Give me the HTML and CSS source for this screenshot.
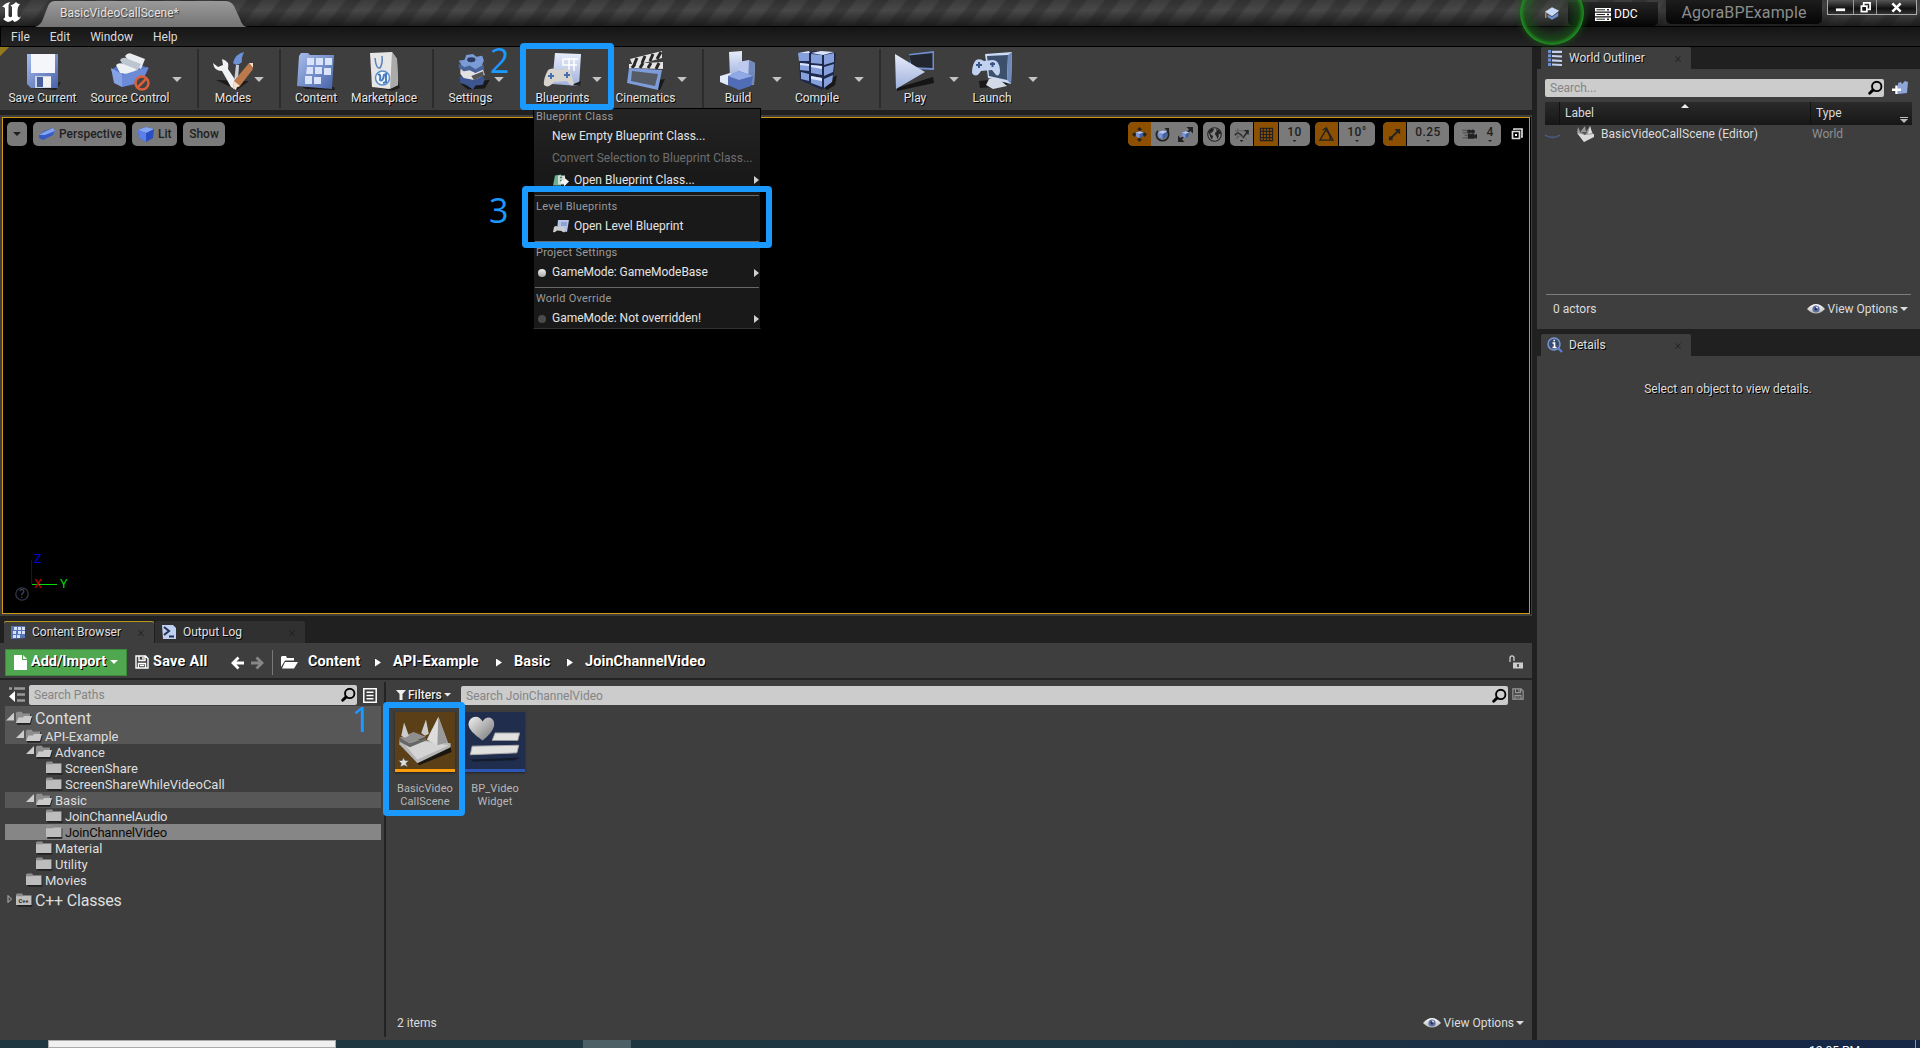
FILE: index.html
```html
<!DOCTYPE html>
<html lang="en">
<head>
<meta charset="utf-8">
<title>AgoraBPExample</title>
<link rel="stylesheet" href="styles.css">
</head>
<body>
<svg class="defs" width="0" height="0">
  <defs>
    <linearGradient id="blue" x1="0" y1="0" x2="1" y2="1"><stop offset="0" stop-color="#a9bdec"/><stop offset="1" stop-color="#4763a8"/></linearGradient>
    <linearGradient id="pale" x1="0" y1="0" x2="0" y2="1"><stop offset="0" stop-color="#e6ecfa"/><stop offset="1" stop-color="#9fb0dc"/></linearGradient>
    <linearGradient id="white" x1="0" y1="0" x2="0" y2="1"><stop offset="0" stop-color="#ffffff"/><stop offset="1" stop-color="#b4b4b4"/></linearGradient>
    <linearGradient id="gray" x1="0" y1="0" x2="1" y2="1"><stop offset="0" stop-color="#f0f0f0"/><stop offset="1" stop-color="#757575"/></linearGradient>
    <symbol id="search" viewBox="0 0 16 16"><circle cx="9.3" cy="6.3" r="5" fill="none" stroke="#000" stroke-width="2"/><path d="M5.5 10 1.8 13.6" stroke="#000" stroke-width="3" stroke-linecap="round"/></symbol>
    <symbol id="folder" viewBox="0 0 18 14"><path d="M1.5 13V2.5L2.5 1H7L8 2.5H16.5V13Z" fill="#222" transform="translate(.8 .8)"/><path d="M1 12V2L2 .8H7L8 2.6H16.5V12Z" fill="#bdbdbd"/><path d="M1 2 2 .8H7L8 2.6V3.2H1Z" fill="#8b8b8b"/></symbol>
    <symbol id="folder-open" viewBox="0 0 18 14"><path d="M1 12V2L2 .8H7L8 2.6H15V6L17 5.5 14.8 13H2Z" fill="#222" transform="translate(.7 .7)"/><path d="M1 12V2L2 .8H7L8 2.6H15V12Z" fill="#8e8e8e"/><path d="M1 12 3.5 6.5H8L9 5H17L15 12Z" fill="#cacaca"/></symbol>
    <symbol id="eye" viewBox="0 0 18 12"><path d="M0 6Q9-4 18 6 9 15 0 6Z" fill="url(#white)"/><circle cx="9" cy="6" r="3.6" fill="#5b6fa3"/><circle cx="9" cy="6" r="1.4" fill="#26304e"/><circle cx="10" cy="4.5" r="1" fill="#dce4ff"/></symbol>
    <symbol id="floppy" viewBox="0 0 14 14"><path d="M1 1H10.5L13 3.5V13H1ZM4 1V5.5H10V1M3.5 13V8.5H10.5V13M8 2V4.5M5 10.5H9" fill="none" stroke="currentColor" stroke-width="1.4"/></symbol>
    <symbol id="cube" viewBox="0 0 16 16"><path d="M0 4 8 1 16 3 15 12 8 16 1 12Z" fill="#294fc0"/><path d="M0 4 8 1 16 3 8 7Z" fill="#86a6ef"/><path d="M0 4 8 7V16L1 12Z" fill="#5b80e8"/></symbol>
    <symbol id="cube-soft" viewBox="0 0 16 16"><path d="M0 4 8 1 16 3 15 12 8 16 1 12Z" fill="#46619f"/><path d="M0 4 8 1 16 3 8 7Z" fill="#bccaf0"/><path d="M0 4 8 7V16L1 12Z" fill="#7c95d2"/></symbol>
    <symbol id="world" viewBox="0 0 18 16"><path d="M0 6 1 1 4 7V5L8 0 9 6 13 0 15 6 17 9 7 16Z" fill="#999"/><path d="M0 7 8 9 17 8V11L7 16Z" fill="#dadada"/><path d="M13 0 15 7 11 8Z" fill="#e0e0e0"/><path d="M4 6 8 9 10 6Z" fill="#555"/></symbol>
  </defs>
</svg>

<div class="app">
  <header class="titlebar">
    <svg class="logo" viewBox="0 0 20 20"><path d="M0 5Q3 1 8 0 6 3 6.500 5V14Q7.500 16 10 14.500V5L8.500 3.500Q12 2.500 14 0 16 2.500 18 2 15.500 5 15.500 8V14L17 15.500Q18 15.500 19 14 18 18 12.500 20L10.500 18Q9 19.500 6 20 3 19 1 17L3 15.500V6.500Q2 4 0 5Z" fill="#fff"/></svg>
    <div class="doc-tab">
      <svg class="doc-shape" viewBox="0 0 212 26" preserveAspectRatio="none"><defs><linearGradient id="tabfill" x1="0" y1="0" x2="0" y2="1"><stop offset="0" stop-color="#9a9a9a"/><stop offset="1" stop-color="#747474"/></linearGradient></defs><path d="M0 26Q6 24 8 18L13 5Q15 0 20 0H190Q196 0 199 5L205 18Q207 25 212 26Z" fill="url(#tabfill)"/></svg>
      <span>BasicVideoCallScene*</span>
    </div>
    <div class="title-right">
      <div class="tutorial"><svg viewBox="0 0 18 16"><path d="M1 6 9 1 17 5 9 11Z" fill="#c9daf8"/><path d="M4 9 9 12 16 7V11L9 15 4 12Z" fill="#6f90cc"/><path d="M2 7V13" stroke="#d89a61" stroke-width="1.300"/></svg></div>
      <div class="ddc"><svg viewBox="0 0 16 13"><path d="M0 0H16V3.500H0ZM0 4.700H16V8.200H0ZM0 9.400H16V13H0Z" fill="#fff"/><path d="M1.500 1.800H10M1.500 6.500H10M1.500 11.200H10" stroke="#222"/><path d="M12 1.800H14M12 6.500H14M12 11.200H14" stroke="#222" stroke-width="1.500"/></svg><span>DDC</span></div>
      <div class="project">AgoraBPExample</div>
      <div class="winbtns">
        <div class="wb"><svg viewBox="0 0 12 12"><path d="M1 7H11V10H1Z" fill="#fff"/></svg></div>
        <div class="wb"><svg viewBox="0 0 12 12"><path d="M4 4V1H11V8H8.500M1.500 4.500H7.500V10.500H1.500Z" fill="none" stroke="#fff" stroke-width="1.900"/></svg></div>
        <div class="wb wide"><svg viewBox="0 0 12 12"><path d="M1.500 1.500 10.500 10.500M10.500 1.500 1.500 10.500" stroke="#fff" stroke-width="2.800"/></svg></div>
      </div>
    </div>
  </header>
  <nav class="menubar"><span>File</span><span>Edit</span><span>Window</span><span>Help</span></nav>

  <main class="main">
    <section class="left">
      <div class="toolbar">
        <div class="tool save"><svg viewBox="0 0 40 40"><path d="M8 37 38 31 33 39Z" fill="#1d1d1d"/><path d="M4 3H35V37H8L4 33Z" fill="url(#blue)"/><path d="M8 3H32V22H8Z" fill="#f4f6fa"/><path d="M12 25H28V37H12Z" fill="#ccd4ea"/><path d="M14 26H20V36H14Z" fill="#48609c"/><path d="M20 26H28V36H20Z" fill="#f1f1f1"/></svg><b>Save Current</b></div>
        <div class="tool source"><svg viewBox="0 0 40 40"><path d="M1 19 16 9 39 17 31 32 12 36Z" fill="#5674c3"/><path d="M15 5Q18 1 22 3L35 8 31 18 20 12Z" fill="#e9ecf0"/><path d="M10 9Q13 5 18 8L31 13 27 21 15 17Z" fill="#bcc5d0"/><path d="M6 14Q9 11 13 13L26 18 23 24 10 22Z" fill="#edf1f3"/><path d="M1 17 12 23 12 36 4 32Z" fill="#86a2e4"/><path d="M12 24 38 16 33 30 12 36Z" fill="#6c8bd6"/><circle cx="32" cy="32" r="6.500" fill="#444" stroke="#d9603a" stroke-width="2.500"/><path d="M27.500 36.500 36.500 27.500" stroke="#d9603a" stroke-width="2.500"/></svg><b>Source Control</b></div><i class="drop"></i>
        <i class="sep"></i>
        <div class="tool modes"><svg viewBox="0 0 40 40"><path d="M3 29 36 30 24 39Z" fill="#1b1b1b"/><path d="M0 12Q1 20 9 20L18 36 23 39 25 33 15 18Q17 10 9 8L10 14 5 16Z" fill="#f1f2f4"/><path d="M23 14 26 14 25 29 21 31Z" fill="#c8ccd8"/><path d="M20 12Q22 3 31 1 28 8 29 11 24 16 20 12Z" fill="#6c91d6"/><path d="M36 12 40 18 27 35 20 38 21 30Z" fill="#bd784b"/><path d="M36 12 40 17 40 12Z" fill="#f5ddbd"/><path d="M21 30 27 35 20 38Z" fill="#f3e2c9"/></svg><b>Modes</b></div><i class="drop"></i>
        <i class="sep"></i>
        <div class="tool content"><svg viewBox="0 0 40 40"><path d="M6 36H38L39 39 10 38Z" fill="#1c1c1c"/><path d="M3 5 5 2H12L14 4H38L36 38 1 35Z" fill="url(#blue)"/><path d="M11 7H18V14H11ZM20 7H27V14H20ZM29 7H36V14H29ZM11 16H17V23H10ZM19 16H26V23H19ZM28 17H35V24H28ZM9 25H16V33H9ZM18 26H25V33H18Z" fill="#d9e3fa"/></svg><b>Content</b></div>
        <div class="tool market"><svg viewBox="0 0 40 40"><path d="M9 36 34 30 36 37 28 40Z" fill="#222"/><path d="M6 2 28 1 33 8 34 34 25 38 8 36Z" fill="#e6e6e6"/><path d="M28 1 33 8 34 34 26 38Z" fill="#aaa"/><path d="M11 7Q12 18 16 17 19 12 18 5" fill="none" stroke="#5c83bf" stroke-width="1.500"/><circle cx="18.500" cy="27" r="7" fill="#f3f6fb" stroke="#5c8dcc" stroke-width="1.500"/><path d="M14 24Q17 22 16 29 19 31 20 24L22 23V31L19 32" fill="none" stroke="#477ebd" stroke-width="2"/></svg><b>Marketplace</b></div>
        <i class="sep"></i>
        <div class="tool settings"><svg viewBox="0 0 40 40"><g transform="translate(3.500 1) scale(.84 .96)"><path d="M7 33 42 29 36 38 16 39Z" fill="#191919"/><path d="M6 26 15 22 31 23 36 28 34 34 25 35 22 39 15 35 7 32Z" fill="#3d568f"/><path d="M7 18 18 14 34 18 36 24 29 27 22 29 11 27 7 23Z" fill="#e2e2e2"/><path d="M20 25 34 20 35 25 23 29Z" fill="#555"/><path d="M5 9 12 8 14 3 22 2 26 5 33 4 35 9 33 13 35 18 29 19 25 22 18 18 11 20 5 16 8 13Z" fill="#7b9bd6"/><path d="M5 12 12 16 18 14 25 18 35 13V18L25 22 18 19 11 20 5 16Z" fill="#486298"/><ellipse cx="20" cy="8" rx="5" ry="2.600" fill="#2b3a5f"/></g></svg><b>Settings</b></div><i class="drop"></i>
        <div class="tool blueprints"><svg viewBox="0 0 40 40"><path d="M12 2 38 3 36 35 9 33Z" fill="url(#pale)"/><path d="M20 8H35M19 14H34M26 7V20M31 7V20M20 8V13" stroke="#fff" stroke-width="1.500"/><path d="M28 34 38 30 37 35Z" fill="#222"/><path d="M5 19Q9 16 14 19L22 18Q27 17 28 23L31 33Q29 37 24 30L11 31Q5 38 1 34 0 28 5 19Z" fill="#d7d3ce"/><path d="M5 25H11M8 22V28M21 24H27M24 21V27" stroke="#496eaf" stroke-width="2"/></svg><b>Blueprints</b></div><i class="drop"></i>
        <div class="tool cinematics"><svg viewBox="0 0 40 40"><path d="M10 33 39 28 34 39Z" fill="#191919"/><path d="M4 8 36 0V7L7 15ZM3 13 37 11V18L3 17Z" fill="#e4e4e4"/><path d="M11 7 8 14M19 5 16 12M27 3 24 10M35 1 31 8M9 13 6 17M17 12 14 17M25 12 22 17M33 12 30 18" stroke="#272727" stroke-width="3"/><path d="M3 17 36 19 32 39 1 32Z" fill="#7e9cda"/><path d="M6 20 32 23 29 35 5 30Z" fill="#555c66"/></svg><b>Cinematics</b></div><i class="drop"></i>
        <i class="sep"></i>
        <div class="tool build"><svg viewBox="0 0 40 40"><path d="M11 1 24 0V22L12 27Z" fill="url(#pale)"/><path d="M20 11 31 9 37 12 36 34 23 31Z" fill="#bdcaef"/><path d="M31 9 37 12 36 34 30 32Z" fill="#7288bd"/><path d="M2 25 12 22 20 27 19 35 9 34 2 31Z" fill="#e3eafa"/><path d="M10 25 21 20 35 25 33 35 21 39 10 34Z" fill="#516db7"/><path d="M10 25 21 20 35 25 21 29Z" fill="#90a9e5"/></svg><b>Build</b></div><i class="drop"></i>
        <div class="tool compile"><svg viewBox="0 0 40 40"><path d="M25 35 40 24 38 34 30 39Z" fill="#181818"/><path d="M2 1 21 0 39 2 38 13 36 29 25 39 3 29Z" fill="#1e2849"/><path d="M1 2 12 2V10L2 10ZM14 3 25 4V13L14 12ZM27 4 37 2V11L27 14ZM3 12 12 13V20L3 19ZM14 14 25 15V24L14 22ZM27 16 37 13 36 21 27 25ZM4 21 12 23V30L4 28ZM14 25 25 27V36L14 32ZM27 28 36 24 35 31 27 37Z" fill="#86a0dd"/><path d="M1 2 12 0 13 2ZM14 2 24 0 37 1 26 4ZM3 12 12 13V15L3 14ZM14 14 25 15V18L14 16ZM14 25 25 27V30L14 28Z" fill="#dae5ff"/></svg><b>Compile</b></div><i class="drop"></i>
        <i class="sep"></i>
        <div class="tool play"><svg viewBox="0 0 40 40"><path d="M2 37 38 26 39 32 2 40Z" fill="#151515"/><path d="M14 3 39 0V19L16 18Z" fill="#6f8fce"/><path d="M14 4.500 37.500 2V17L17 16Z" fill="#22262e"/><path d="M0 3 30 21 1 38Z" fill="url(#pale)"/></svg><b>Play</b></div><i class="drop"></i>
        <div class="tool launch"><svg viewBox="0 0 40 40"><path d="M7 30 38 27 34 35 8 37Z" fill="#191919"/><path d="M13 3 40 1 39 33 16 27Z" fill="#cddcf5"/><path d="M15 5 36 4 35 29 17 25Z" fill="#3c506d"/><path d="M36 4 40 1 39 33 35 29Z" fill="#6f89bb"/><path d="M17 28 27 28 35 35 21 38 14 34Z" fill="#d4dae7"/><path d="M4 9Q8 7 12 10L20 9Q27 8 28 19 28 26 24 24L20 19 9 20Q4 28 0 22 0 13 4 9Z" fill="#c0d2f0"/><path d="M4 14H10M7 11V17M18 13H23M20.500 11V16" stroke="#385785" stroke-width="2"/></svg><b>Launch</b></div><i class="drop"></i>
      </div>
      <div class="viewport">
        <div class="vp-bar">
          <div class="pill p-menu"><i class="dn"></i></div>
          <div class="pill p-persp"><svg viewBox="0 0 16 12"><path d="M0 7 5 3 14 0 16 3 14 7 4 12 0 10Z" fill="#365bc8"/><path d="M0 7 5 4 14 0 16 3 6 7Z" fill="#82a4ec"/></svg>Perspective</div>
          <div class="pill p-lit"><svg viewBox="0 0 16 16"><use href="#cube"/></svg>Lit</div>
          <div class="pill p-show">Show</div>
          <div class="vp-right">
            <div class="group g1"><div class="on"><svg viewBox="0 0 16 16"><path d="M8 0 11 3H5ZM8 16 5 13H11ZM0 8 3 5V11ZM16 8 13 11V5ZM7 2H9V14H7ZM2 7H14V9H2Z" fill="#222"/><use href="#cube-soft" x="4" y="4" width="8" height="8"/></svg></div><div><svg viewBox="0 0 16 16"><path d="M3 4A6.500 6.500 0 1 0 13 4" fill="none" stroke="#222" stroke-width="1.800"/><path d="M10 1H15V6Z" fill="#222"/><use href="#cube-soft" x="3" y="3" width="10" height="10"/></svg></div><div><svg viewBox="0 0 16 16"><path d="M2 14 14 2" stroke="#222" stroke-width="2"/><path d="M9 0H16V7ZM0 9V16H7Z" fill="#222"/><use href="#cube-soft" x="4" y="4" width="8" height="8"/></svg></div></div>
            <div class="group g2"><div><svg viewBox="0 0 16 16"><circle cx="8" cy="8" r="7.200" fill="#858585" stroke="#222" stroke-width="1.200"/><path d="M1.500 5 5 1.500 7.500 2 6.500 4.500 5 6 3.500 6 4 8 6.500 9.500 5.500 13 4 12 3 9ZM9.500 2 13 3.500 15 7 14 8 12.500 7 12.500 10.500 11 13 10 9.500 8.500 8 9 5.500 10.500 4.500Z" fill="#222"/></svg></div></div>
            <div class="group g3"><div class="has-dn"><svg viewBox="0 0 16 14"><path d="M1 8Q4 2 10 10L15 3M11 3H15V7" fill="none" stroke="#222" stroke-width="1.500"/><path d="M1 3H11M4 0V12M1 12Q6 5 14 12" fill="none" stroke="#555" stroke-width=".8"/></svg></div><div class="on"><svg viewBox="0 0 16 16"><path d="M1.500 1.500H14.500V14.500H1.500ZM4.700 1V15M8 1V15M11.300 1V15M1 4.700H15M1 8H15M1 11.300H15" fill="none" stroke="#222" stroke-width="1.200"/></svg></div><div class="has-dn num">10</div></div>
            <div class="group g4"><div class="on"><svg viewBox="0 0 16 16"><path d="M1 14H15L8 2ZM7 3Q12 7 12 14M4 3 8 1 10 5" fill="none" stroke="#222" stroke-width="1.400"/></svg></div><div class="has-dn num">10°</div></div>
            <div class="group g5"><div class="on"><svg viewBox="0 0 16 16"><path d="M3 13 12 4" stroke="#222" stroke-width="2"/><path d="M8 2H14V8ZM2 10H6V14H2Z" fill="#222"/></svg></div><div class="has-dn num">0.25</div></div>
            <div class="group g6"><div class="cam"><svg viewBox="0 0 18 14"><path d="M7 6H15V12H7ZM15 8 18 6V12L15 11Z" fill="#222"/><circle cx="8.500" cy="3.500" r="2.500" fill="#222"/><circle cx="13" cy="3.500" r="2.500" fill="#222"/><path d="M0 2H6M1 5H8M3 8H7M1 11H7" stroke="#444"/></svg></div><div class="has-dn num">4</div></div>
            <svg class="maxi" viewBox="0 0 12 12"><path d="M3 2V1H11V9H10M1.500 3.500H8.500V10.500H1.500Z" fill="none" stroke="#ddd" stroke-width="1.700"/><path d="M4 6H6V8H4Z" fill="#fff"/></svg>
          </div>
        </div>
        <div class="axis">
          <svg viewBox="0 0 60 50"><path d="M16.500 9V33" stroke="#0000d0"/><path d="M17 33.500H42" stroke="#00e000"/><circle cx="7" cy="43" r="6.200" fill="none" stroke="#33394a" stroke-width="1.300"/></svg>
          <span class="ax z">Z</span><span class="ax x">X</span><span class="ax y">Y</span><span class="ax q">?</span>
        </div>
      </div>

      <div class="tabs">
        <div class="tab active"><svg viewBox="0 0 16 16"><path d="M1 2H15V14L1 15Z" fill="#5674b8"/><path d="M4 3H7V6H4ZM8 3H11V6H8ZM12 3H15V6H12ZM3 7H6V10H3ZM8 7H11V10H8ZM12 7H15V10H12ZM3 11H6V14H3ZM7 11H10V14H7Z" fill="#d5e1fc"/></svg><span>Content Browser</span><em>×</em></div>
        <div class="tab"><svg viewBox="0 0 16 16"><path d="M1 1H12L15 4V15H2Z" fill="#bfd0f2"/><path d="M3 3 8 7 3 11M8 12.500H13" fill="none" stroke="#26334e" stroke-width="2"/></svg><span>Output Log</span><em>×</em></div>
      </div>

      <div class="cb-bar">
        <div class="add"><svg viewBox="0 0 13 15"><path d="M0 0H8V5H13V15H0ZM9 0 13 4H9Z" fill="#fff"/></svg><span>Add/Import</span><i class="dn"></i></div>
        <div class="saveall"><svg viewBox="0 0 14 14"><use href="#floppy"/></svg><span>Save All</span></div>
        <svg class="nav" viewBox="0 0 34 14"><path d="M13 7H2M7.500 1.500 2 7 7.500 12.500" fill="none" stroke="#fff" stroke-width="2.800"/><path d="M20 7H31M25.500 1.500 31 7 25.500 12.500" fill="none" stroke="#888" stroke-width="2.800"/></svg>
        <i class="vline"></i>
        <svg class="pathicon" viewBox="0 0 17 13"><path d="M0 11V1L1 0H5L6 2H13V4.500H4Z" fill="#fff"/><path d="M4 6H17L13 12.500H1Z" fill="#fff"/></svg>
        <div class="crumbs"><span class="c1">Content</span><i></i><span class="c2">API-Example</span><i></i><span class="c3">Basic</span><i></i><span class="c4">JoinChannelVideo</span></div>
        <svg class="lock" viewBox="0 0 14 14"><path d="M1 7V3Q1 .8 3 .8 5 .8 5 3V6" fill="none" stroke="#ccc" stroke-width="1.300"/><path d="M4 7.500H14V13.500H4Z" fill="#ccc"/><path d="M9 9V12" stroke="#333" stroke-width="1.500"/></svg>
      </div>

      <div class="cb-body">
        <aside class="sources">
          <div class="search-row"><svg class="collapse" viewBox="0 0 17 16"><path d="M1 1.500H4M6 1.500H17M9 7.500H17M9 13.500H17" stroke="#999" stroke-width="2.600"/><path d="M7 4V15L1 9.500Z" fill="#fff"/></svg><div class="field"><span>Search Paths</span><svg viewBox="0 0 16 16"><use href="#search"/></svg></div><svg class="list" viewBox="0 0 14 15"><path d="M.8.8H13.200V14.200H.8ZM3.500 4.200H10.500M3.500 7.500H10.500M3.500 10.800H10.500" fill="none" stroke="#fff" stroke-width="1.500"/></svg></div>
          <div class="tree">
            <div class="row big hl l0"><i class="exp"></i><svg><use href="#folder-open"/></svg>Content</div>
            <div class="row hl l1"><i class="exp"></i><svg><use href="#folder-open"/></svg>API-Example</div>
            <div class="row l2"><i class="exp"></i><svg><use href="#folder-open"/></svg>Advance</div>
            <div class="row l3"><i></i><svg><use href="#folder"/></svg>ScreenShare</div>
            <div class="row l3"><i></i><svg><use href="#folder"/></svg>ScreenShareWhileVideoCall</div>
            <div class="row hl l2"><i class="exp"></i><svg><use href="#folder-open"/></svg>Basic</div>
            <div class="row l3 tight"><i></i><svg><use href="#folder"/></svg>JoinChannelAudio</div>
            <div class="row sel l3 tight"><i></i><svg><use href="#folder"/></svg>JoinChannelVideo</div>
            <div class="row l2"><i></i><svg><use href="#folder"/></svg>Material</div>
            <div class="row l2"><i></i><svg><use href="#folder"/></svg>Utility</div>
            <div class="row l1"><i></i><svg><use href="#folder"/></svg>Movies</div>
            <div class="row big l0 cpp tight"><svg class="col" viewBox="0 0 8 10"><path d="M2 1.500V8.500L5.500 5Z" fill="none" stroke="#bbb"/></svg><svg viewBox="0 0 18 14"><use href="#folder"/><text x="3.500" y="10" class="cpptext">C++</text></svg>C++ Classes</div>
          </div>
        </aside>
        <section class="assets">
          <div class="filter-row"><div class="filters"><svg viewBox="0 0 10 10"><path d="M0 0H10L6.500 4V10H3.500V4Z" fill="#eee"/></svg><span>Filters</span><i class="dn"></i></div><div class="field"><span>Search JoinChannelVideo</span><svg viewBox="0 0 16 16"><use href="#search"/></svg></div><svg class="savesearch" viewBox="0 0 14 14"><use href="#floppy"/></svg></div>
          <div class="grid">
            <div class="asset map"><svg viewBox="0 0 60 60"><path d="M4 33 57 36 58 42 24 56 7 38Z" fill="#1b1510"/><path d="M3 29 34 30 57 33V37L22 54 3 34Z" fill="#b5b5b5"/><path d="M6 31 30 31 55 35 22 50Z" fill="#d4d4d4"/><path d="M3 27 18 21 31 26 14 33Z" fill="#8e8e8e"/><path d="M3 27 14 33 31 27V30L14 37 3 31Z" fill="#666"/><path d="M8 11 13 25 9 27 5 25ZM31 8 34 23 30 25 26 22Z" fill="#ccc"/><path d="M44 5 54 32 43 35 32 29Z" fill="#ddd"/><path d="M44 5 54 32 43 35Z" fill="#999"/><path d="M7 48 9 51 13 51 10 54 12 58 8 56 4 58 5 54 2 51H6Z" fill="#ddd" stroke="#444" stroke-width=".6"/></svg><p>BasicVideo<br>CallScene</p></div>
            <div class="asset widget"><svg viewBox="0 0 60 60"><path d="M17 30Q2 20 2 13 3 5 10 5 14 5 17 10 20 5 25 6 30 8 29 15 27 22 17 30Z" fill="url(#gray)"/><path d="M30 22H56L54 30H27Z" fill="#e1e1df" stroke="#999"/><path d="M6 36 55 35 53 43 4 45Z" fill="#e1e1df" stroke="#aaa"/><path d="M3 50 56 48 50 51 8 52Z" fill="#141b2c"/></svg><p>BP_Video<br>Widget</p></div>
          </div>
          <div class="cb-foot"><span>2 items</span><div class="viewopts"><svg viewBox="0 0 18 12"><use href="#eye"/></svg><span>View Options</span><i class="dn"></i></div></div>
        </section>
      </div>
    </section>

    <section class="right">
      <div class="tabs"><div class="tab"><svg viewBox="0 0 16 16"><path d="M2.500 0V16" stroke="#6f91d8" stroke-width="3" stroke-dasharray="3 1.300"/><path d="M5 1.800H15M5 6 15 6.500M5 10.300 15 11M5 14.500 15 15" stroke="#c3d2f2" stroke-width="2.200"/></svg><span>World Outliner</span><em>×</em></div></div>
      <div class="outliner">
        <div class="o-search"><div class="field"><span>Search...</span><svg viewBox="0 0 16 16"><use href="#search"/></svg></div><svg class="newf" viewBox="0 0 16 14"><path d="M6 2 9 1 10 3 13 0 16 1 15 12 6 13Z" fill="#8da5d8"/><path d="M4.500 4.500V13M0 8.800H9" stroke="#fff" stroke-width="2.400"/></svg></div>
        <div class="o-head"><div class="h0"></div><div class="h1">Label<i class="sort"></i></div><div class="h2">Type<i class="dn"></i></div></div>
        <div class="o-row"><svg class="closed" viewBox="0 0 16 6"><path d="M0 1Q8 6 16 1" fill="none" stroke="#4c5b84" stroke-width="1.800"/></svg><svg class="wicon" viewBox="0 0 18 16"><use href="#world"/></svg><span class="nm">BasicVideoCallScene (Editor)</span><span class="ty">World</span></div>
        <div class="o-foot"><span>0 actors</span><div class="viewopts"><svg viewBox="0 0 18 12"><use href="#eye"/></svg><span>View Options</span><i class="dn"></i></div></div>
      </div>
      <div class="tabs t2"><div class="tab"><svg viewBox="0 0 16 16"><circle cx="7" cy="7" r="6" fill="#394a6f" stroke="#7994d5" stroke-width="1.500"/><path d="M11 11 15 15" stroke="#5d82d8" stroke-width="2.200"/><path d="M5.500 6H7.500V10.500M5.500 10.500H9.500M6.500 3.500H8" fill="none" stroke="#fff" stroke-width="1.600"/></svg><span>Details</span><em>×</em></div></div>
      <div class="details">Select an object to view details.</div>
    </section>
  </main>

  <footer class="taskbar"><div class="tb-search"></div><div class="tb-app"></div><div class="clock">12:05 PM</div><div class="desk"></div></footer>
</div>

<div class="menu">
  <div class="mh">Blueprint Class</div>
  <div class="mi">New Empty Blueprint Class...</div>
  <div class="mi off">Convert Selection to Blueprint Class...</div>
  <div class="mi ic sub"><svg viewBox="0 0 16 12"><path d="M2 1 8 0 8 11 0 11Z" fill="#6bb193"/><path d="M5 1H12V10H5Z" fill="#d3ddd7"/><path d="M7 3H9M7 6H9" stroke="#408363" stroke-width="1.500"/><path d="M8 6H11V3L16 7 11 12V9H8Z" fill="#f4f4f4"/></svg>Open Blueprint Class...</div>
  <div class="mh line">Level Blueprints</div>
  <div class="mi ic"><svg viewBox="0 0 16 13"><path d="M5 0 16 0 14 12 4 10Z" fill="#b6c5e9"/><path d="M8 3H14M8 5H14" stroke="#6680b6"/><path d="M1 7Q3 5 5 7H8Q10 5 11 8L12 12Q10 13 8 10.500H4Q2 13 0 12Z" fill="#ccc"/></svg>Open Level Blueprint</div>
  <div class="mh line">Project Settings</div>
  <div class="mi dot sub">GameMode: GameModeBase</div>
  <div class="mh line">World Override</div>
  <div class="mi dot dim sub">GameMode: Not overridden!</div>
</div>
<div class="mark m1"></div><div class="mark m2"></div><div class="mark m3"></div>
<div class="step s1">1</div><div class="step s2">2</div><div class="step s3">3</div>
</body>
</html>
```
FILE: styles.css
```css
* { box-sizing: border-box; }
body { margin: 0; width: 1920px; height: 1048px; overflow: hidden; background: #202020; color: #dcdcdc; font: 12px/16px Roboto, "Liberation Sans", sans-serif; white-space: nowrap; }
svg { display: block; flex: none; overflow: visible; }
i, em { font-style: normal; display: block; flex: none; }
.defs { position: absolute; }
.app { display: flex; flex-direction: column; height: 1048px; }

/* title bar */
.titlebar { height: 27px; display: flex; align-items: flex-start; border-bottom: 1px solid #000;
  background: linear-gradient(180deg, rgba(20,20,20,.25), rgba(20,20,20,0) 40%, rgba(20,20,20,.8)), repeating-linear-gradient(128deg, #484848 0 11px, #3a3a3a 14px 23px, #484848 26px); }
.logo { width: 20px; height: 20px; margin: 2px 0 0 2px; }
.doc-tab { width: 212px; height: 26px; margin: 1px 0 0 13px; display: grid; }
.doc-shape { grid-area: 1/1; width: 212px; height: 26px; }
.doc-tab span { grid-area: 1/1; padding: 4px 0 0 25px; color: #e4e4e4; letter-spacing: .04px; text-shadow: 1px 1px 1px #333; }
.title-right { margin-left: auto; display: flex; height: 26px; }
.tutorial { width: 64px; height: 64px; margin: -19px -16px 0 0; border-radius: 50%; z-index: 1; display: flex; align-items: center; justify-content: center; background: radial-gradient(circle closest-side, rgba(50,80,50,.1) 50%, rgba(22,100,22,.55) 85%, #1f861f 97%); box-shadow: 0 0 4px 3px rgba(22,90,22,.4); }
.tutorial svg { width: 16px; height: 15px; }
.ddc { width: 90px; height: 24px; margin-top: 2px; padding-left: 27px; display: flex; align-items: center; gap: 3px; color: #fff; font-size: 12px; border-radius: 0 0 5px 5px; background: linear-gradient(#252525, #050505); }
.ddc svg { width: 16px; height: 13px; }
.project { width: 156px; height: 24px; margin-left: 8px; text-align: center; font-size: 16px; line-height: 25px; letter-spacing: .1px; color: #8c8c8c; border-radius: 0 0 5px 5px; background: linear-gradient(#1c1c1c, #050505); }
.winbtns { display: flex; margin: 0 3px 0 5px; height: 15px; border: 1px solid #aaa; border-top: 0; }
.wb { width: 26px; display: flex; align-items: center; justify-content: center; background: linear-gradient(#555, #111 60%, #333); border-right: 1px solid #999; }
.wb:nth-child(2) { width: 23px; }
.wb.wide { width: 39px; border: 0; }
.wb svg { width: 11px; height: 11px; }

.menubar { height: 20px; display: flex; gap: 20px; padding: 2px 0 0 10px; background: linear-gradient(#151515, #242424); border-bottom: 1px solid #000; border-left: 1px solid #000; }

.main { height: 993px; display: flex; gap: 5px; }
.left { width: 1532px; display: flex; flex-direction: column; }
.right { width: 383px; display: flex; flex-direction: column; }

/* main toolbar */
.toolbar { height: 63px; display: flex; background: linear-gradient(135deg, #94791f 6px, transparent 7px), #3e3e3e; padding-top: 4px; }
.tool { display: flex; flex-direction: column; align-items: center; }
.tool svg { width: 40px; height: 40px; margin-bottom: -1px; }
.tool b { font-weight: 400; color: #e6e6e6; text-shadow: 1px 1px 0 #000; }
.drop { width: 12px; height: 5px; margin-top: 26px; background: #c4c4c4; clip-path: polygon(10% 0, 90% 0, 50% 100%); }
.sep { width: 2px; height: 59px; margin: -2px 0 0 14px; background: #2c2c2c; }
.save { width: 84px; padding-left: 1px; }
.source { width: 82px; margin-left: 5px; }
.modes { width: 40px; margin-left: 14px; }
.content { width: 44px; margin-left: 13px; }
.market { width: 76px; margin-left: 8px; }
.market + .sep { margin-left: 10px; }
.settings { width: 45px; margin-left: 14px; }
.blueprints { width: 57px; margin-left: 29px; }
.cinematics { width: 61px; margin-left: 12px; }
.build { width: 40px; margin-left: 14px; }
.build + .drop, .compile + .drop, .play + .drop { margin-left: 13px; }
.compile { width: 46px; margin-left: 11px; }
.play { width: 40px; margin-left: 14px; }
.launch { width: 46px; margin-left: 9px; }
.launch + .drop { margin-left: 12px; }

/* viewport */
.viewport { margin-top: 5px; height: 501px; background: #000; border: 2px solid #3e3e3e; border-right-width: 1px; display: flex; flex-direction: column; justify-content: space-between; outline: 1px solid #d29a13; outline-offset: -3px; }
.vp-bar { display: flex; padding: 5px 0 0 5px; color: #1f1f1f; font-weight: 500; line-height: 24px; }
.pill { height: 24px; border-radius: 5px; background: #7a7a7a; margin-right: 6px; display: flex; align-items: center; gap: 4px; }
.dn { width: 8px; height: 4px; background: currentColor; clip-path: polygon(0 0, 100% 0, 50% 100%); }
.p-menu { width: 20px; justify-content: center; }
.p-persp { width: 93px; padding-left: 6px; }
.p-persp svg { width: 16px; height: 12px; }
.p-lit { width: 45px; padding-left: 6px; }
.p-lit svg { width: 16px; height: 16px; }
.p-show { width: 42px; justify-content: center; }
.vp-right { margin-left: auto; display: flex; padding-right: 8px; }
.group { height: 24px; display: flex; border-radius: 5px; overflow: hidden; background: #7a7a7a; }
.group > div { width: 23px; display: flex; align-items: center; justify-content: center; position: relative; }
.group .on { background: #8c5000; }
.group svg { width: 15px; height: 15px; }
.group .num { line-height: 21px; align-items: flex-start; border-left: 1px solid #000; font-size: 12px; letter-spacing: .4px; }
.has-dn::after { content: ""; position: absolute; bottom: 4px; left: calc(50% - 2px); width: 4px; height: 2px; background: #222; clip-path: polygon(0 0, 100% 0, 50% 100%); }
.g1 { width: 70px; margin-right: 5px; }
.g2 { width: 22px; margin-right: 5px; }
.g3 { width: 80px; margin-right: 5px; }
.g3 > .on { width: 25px; border-left: 1px solid #000; }
.g3 > .num { width: 32px; }
.g4 { width: 60px; margin-right: 8px; }
.g4 > .num { width: 37px; }
.g5 { width: 66px; margin-right: 5px; }
.g5 > .num { width: 43px; }
.g6 { width: 47px; }
.g6 > .cam { width: 31px; }
.g6 > .num { width: 10px; border: 0; }
.maxi { width: 12px; height: 12px; margin: 6px 0 0 10px; }
.axis { position: relative; width: 60px; height: 50px; margin: 0 0 13px 13px; }
.axis svg { width: 60px; height: 50px; }
.ax { position: absolute; line-height: 12px; font-size: 12.5px; }
.z { left: 19px; top: 2px; color: #0000d8; }
.x { left: 19px; top: 27px; color: #d00000; }
.y { left: 45px; top: 27px; color: #00d800; }
.q { left: 4px; top: 37px; color: #444c5e; font-size: 12px; }

/* panel tabs */
.tabs { height: 27px; padding: 5px 0 0 4px; display: flex; gap: 1px; background: #202020; }
.tab { width: 150px; height: 22px; display: flex; align-items: center; padding: 0 7px 0 6px; background: #303030; border-radius: 2px 2px 0 0; color: #e0e0e0; text-shadow: 1px 1px 0 #000; }
.tab svg { width: 16px; height: 16px; margin-right: 6px; }
.tab em { margin-left: auto; color: #1e1e1e; font-weight: 300; font-size: 14px; text-shadow: none; width: 12px; text-align: center; }
.tab.active, .right .tab { background: #3e3e3e; }
.tab.active { box-shadow: inset 0 1px 0 #b79a1c; }
.right .tabs { height: 22px; padding-top: 0; }
.right .t2 { height: 27px; padding-top: 5px; }

/* content browser */
.cb-bar { height: 35px; display: flex; align-items: center; background: #3e3e3e; padding: 3px 9px 0 5px; font-size: 14.500px; letter-spacing: .09px; font-weight: 700; color: #fff; text-shadow: 1px 1px 0 #000; }
.add { width: 122px; height: 27px; padding: 0 8px 1px; display: flex; align-items: center; justify-content: space-between; background: #4fa74f; border: 1px solid #3d883d; margin-top: 1px; letter-spacing: 0; }
.add svg { width: 13px; height: 15px; }
.saveall { display: flex; align-items: center; gap: 4px; margin-left: 8px; width: 96px; letter-spacing: .25px; }
.saveall svg { width: 14px; height: 14px; }
.nav { width: 34px; height: 14px; margin-top: 1px; }
.vline { width: 1px; height: 25px; margin: 0 8px 0 7px; background: #777; }
.pathicon { width: 17px; height: 13px; margin-right: 10px; }
.crumbs { display: flex; align-items: center; }
.crumbs i { width: 6px; height: 8px; background: #fff; clip-path: polygon(0 0, 100% 50%, 0 100%); margin: 1px 0 0; }
.c1 { width: 67px; }
.crumbs .c2, .crumbs .c3, .crumbs .c4 { margin-left: 12px; }
.c2 { width: 103px; }
.c3 { width: 53px; }
.lock { width: 14px; height: 14px; margin-left: auto; margin-top: -1px; }
.cb-body { height: 362px; display: flex; background: #3e3e3e; border-top: 2px solid #232323; }
.sources { width: 384px; }
.search-row { display: flex; align-items: center; height: 20px; margin: 5px 0 1px 8px; }
.collapse { width: 17px; height: 16px; margin-right: 4px; }
.field { background: #ccc; border-radius: 2px; color: #858585; display: flex; align-items: center; justify-content: space-between; padding: 0 1px 0 5px; height: 20px; width: 328px; text-shadow: none; }
.field svg { width: 15px; height: 16px; }
.list { width: 14px; height: 15px; margin-left: 6px; }
.tree { margin-left: 5px; width: 376px; }
.row { height: 16px; display: flex; align-items: center; font-size: 13px; line-height: 16px; padding-top: 1px; color: #dedede; }
.row svg { width: 18px; height: 14px; margin: -2px 2px 0 0; }
.row i { width: 8px; height: 8px; margin: -5px 1px 0 1px; }
.row .exp { background: #ccc; clip-path: polygon(100% 0, 100% 100%, 0 100%); }
.row .col { width: 8px; height: 10px; margin: -4px 1px 0 1px; }
.tight { letter-spacing: -.2px; }
.big { height: 24px; font-size: 16px; }
.big.hl { height: 23px; padding-top: 3px; }
.big.hl + .hl { height: 15px; padding-top: 0; }
.hl { background: #575757; }
.sel { background: #868686; color: #0c0c0c; }
.l1 { padding-left: 10px; }
.l2 { padding-left: 20px; }
.l3 { padding-left: 30px; }
.cpptext { font: bold 6px Roboto, sans-serif; fill: #222; }
.assets { flex: 1; display: flex; flex-direction: column; border-left: 2px solid #232323; margin: 2px 0 3px; }
.filter-row { display: flex; align-items: center; height: 24px; padding-left: 10px; }
.filters { width: 65px; display: flex; align-items: center; gap: 2px; font-weight: 500; color: #eee; text-shadow: 1px 1px 0 #000; margin-top: 1px; }
.filters svg { width: 10px; height: 10px; }
.filter-row .field { width: 1047px; height: 19px; margin-top: 2px; padding-top: 1px; }
.savesearch { width: 12px; height: 12px; color: #999; margin-left: 4px; }
.grid { display: flex; gap: 10px; padding: 6px 0 0 9px; }
.asset { width: 60px; }
.asset svg { width: 60px; height: 60px; box-shadow: 0 1px 2px #222; }
.map svg { background: #5b3f16; border-bottom: 3px solid #fc9b0a; }
.widget svg { background: #202d4d; border-bottom: 3px solid #2c57b4; }
.asset p { margin: 10px 0 0; font-size: 11px; line-height: 13px; text-align: center; color: #b8b8b8; letter-spacing: .1px; }
.cb-foot { margin-top: auto; display: flex; justify-content: space-between; padding: 0 8px 6px 11px; }
.viewopts { display: flex; align-items: center; gap: 2px; }
.viewopts svg { width: 18px; height: 12px; margin-right: 1px; }

/* outliner and details */
.outliner { height: 260px; background: #3e3e3e; padding: 10px 8px 0; display: flex; flex-direction: column; }
.o-search { display: flex; align-items: center; }
.o-search .field { width: 339px; height: 18px; }
.newf { width: 16px; height: 14px; margin-left: 8px; }
.o-head { height: 23px; margin-top: 5px; display: flex; background: linear-gradient(#2a2a2a, #171717); line-height: 22px; }
.h0 { width: 15px; border-right: 1px solid #111; }
.h1 { width: 251px; padding-left: 5px; position: relative; border-right: 1px solid #111; }
.h2 { flex: 1; padding-left: 5px; position: relative; }
.sort { position: absolute; left: 121px; top: 2px; width: 8px; height: 4px; background: #eee; clip-path: polygon(50% 0, 100% 100%, 0 100%); }
.h2 .dn { position: absolute; right: 4px; bottom: 2px; color: #bbb; }
.h2::after { content: ""; position: absolute; right: 4px; bottom: 7px; width: 8px; height: 1px; background: #bbb; }
.o-row { height: 18px; display: flex; align-items: center; }
.closed { width: 15px; height: 6px; margin-top: 5px; }
.wicon { width: 18px; height: 16px; margin: 0 6px 0 17px; }
.nm { width: 211px; letter-spacing: .06px; }
.ty { color: #8f8f8f; }
.o-foot { margin: auto 1px 0; height: 35px; border-top: 1px solid #7c7c7c; display: flex; justify-content: space-between; padding: 6px 3px 0 7px; align-items: flex-start; }
.details { flex: 1; background: #3e3e3e; text-align: center; padding: 25px 1px 0 0; text-shadow: 1px 1px 0 #000; }

/* taskbar */
.taskbar { height: 8px; display: flex; overflow: hidden; background: linear-gradient(90deg, #1f3740, #1e3742 60%, #172846 90%); }
.tb-search { width: 288px; margin-left: 48px; background: #f0f0f0; border: 1px solid #aaa; }
.tb-app { width: 48px; margin-left: 247px; background: #4d6066; }
.clock { margin: 3px 55px 0 auto; color: #fff; }
.desk { width: 1px; background: #8995a5; margin-right: 4px; }

/* blueprints menu */
.menu { position: absolute; left: 533px; top: 108px; width: 228px; height: 221px; padding: 0 1px; border: 1px solid #000; border-bottom-color: #333; background: linear-gradient(#242424, #191919 30%); }
.mh { height: 17px; padding-left: 1px; line-height: 15px; font-size: 11px; color: #9a9a9a; letter-spacing: .25px; }
.mi { height: 22px; padding: 0 0 2px 17px; line-height: 20px; display: flex; align-items: center; position: relative; color: #e4e4e4; }
.mi.off { color: #6e6e6e; }
.mi.ic svg { width: 16px; height: 13px; margin: 1px 5px 0 1px; }
.line { border-top: 1px solid #686868; margin-top: 3px; height: 22px; padding-top: 3px; }
.mh.line + .mi { height: 21px; padding-bottom: 3px; }
.sub::after { content: ""; position: absolute; right: 0; top: 6px; width: 5px; height: 8px; background: #d0d0d0; clip-path: polygon(0 0, 100% 50%, 0 100%); }
.dot::before { content: ""; position: absolute; left: 3px; top: 6px; width: 8px; height: 8px; border-radius: 50%; background: linear-gradient(#eee, #aaa); }
.dot { letter-spacing: -.03px; }
.dot.dim::before { background: #4b4b4b; }

/* numbered step marks over the window */
.mark { position: absolute; border: 6px solid #1a9aff; border-radius: 4px; }
.m1 { left: 383px; top: 702px; width: 82px; height: 114px; }
.m2 { left: 520px; top: 43px; width: 94px; height: 67px; }
.m3 { left: 522px; top: 186px; width: 250px; height: 62px; }
.step { position: absolute; font: 34px/34px "Open Sans", "Noto Sans", sans-serif; color: #1a9aff; }
.s1 { left: 352px; top: 702px; }
.s2 { left: 490px; top: 43px; }
.s3 { left: 489px; top: 193px; }
```
